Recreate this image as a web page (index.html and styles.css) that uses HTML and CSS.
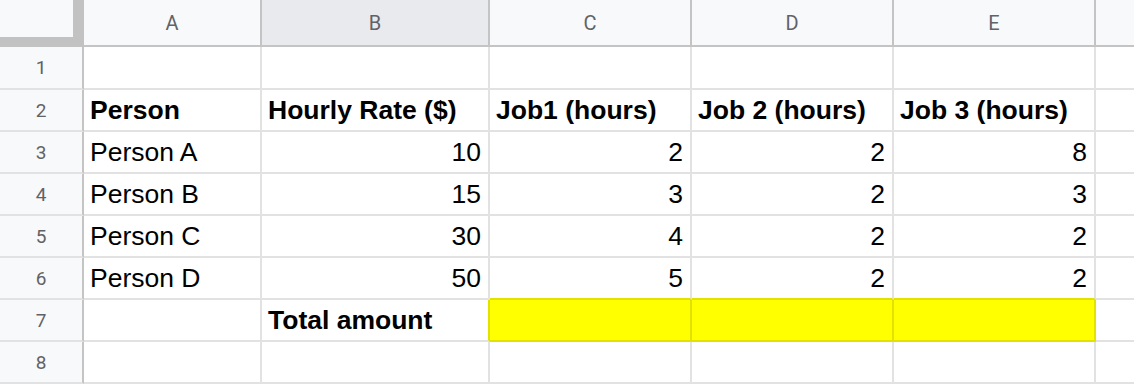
FILE: index.html
```html
<!DOCTYPE html>
<html>
<head>
<meta charset="utf-8">
<link rel="stylesheet" href="styles.css">
</head>
<body>
<div class="sheet">
  <div class="corner"><div class="corner-inner"></div></div>
  <div class="colhead">A</div>
  <div class="colhead hover">B</div>
  <div class="colhead">C</div>
  <div class="colhead">D</div>
  <div class="colhead">E</div>
  <div class="colhead last"></div>

  <div class="rowhead">1</div>
  <div class="cell"></div><div class="cell"></div><div class="cell"></div><div class="cell"></div><div class="cell"></div><div class="cell last"></div>

  <div class="rowhead">2</div>
  <div class="cell bold">Person</div>
  <div class="cell bold">Hourly Rate ($)</div>
  <div class="cell bold">Job1 (hours)</div>
  <div class="cell bold">Job 2 (hours)</div>
  <div class="cell bold">Job 3 (hours)</div>
  <div class="cell last"></div>

  <div class="rowhead">3</div>
  <div class="cell">Person A</div>
  <div class="cell num">10</div>
  <div class="cell num">2</div>
  <div class="cell num">2</div>
  <div class="cell num">8</div>
  <div class="cell last"></div>

  <div class="rowhead">4</div>
  <div class="cell">Person B</div>
  <div class="cell num">15</div>
  <div class="cell num">3</div>
  <div class="cell num">2</div>
  <div class="cell num">3</div>
  <div class="cell last"></div>

  <div class="rowhead">5</div>
  <div class="cell">Person C</div>
  <div class="cell num">30</div>
  <div class="cell num">4</div>
  <div class="cell num">2</div>
  <div class="cell num">2</div>
  <div class="cell last"></div>

  <div class="rowhead">6</div>
  <div class="cell">Person D</div>
  <div class="cell num">50</div>
  <div class="cell num yb">5</div>
  <div class="cell num yb">2</div>
  <div class="cell num yb">2</div>
  <div class="cell last"></div>

  <div class="rowhead">7</div>
  <div class="cell"></div>
  <div class="cell bold yr">Total amount</div>
  <div class="cell yellow"></div>
  <div class="cell yellow"></div>
  <div class="cell yellow"></div>
  <div class="cell last"></div>

  <div class="rowhead">8</div>
  <div class="cell"></div><div class="cell"></div><div class="cell"></div><div class="cell"></div><div class="cell"></div><div class="cell last"></div>
</div>
</body>
</html>
```
FILE: styles.css
```css
html, body {
  margin: 0;
  padding: 0;
  background: #ffffff;
}

.sheet {
  display: grid;
  grid-template-columns: 84px 178px 228px 202px 202px 202px 1fr;
  grid-template-rows: 47px 43px repeat(7, 42px);
  width: 1134px;
  height: 384px;
  overflow: hidden;
  font-family: "Liberation Sans", Arial, sans-serif;
}

.corner {
  background: #c2c2c2;
  box-sizing: border-box;
}

.corner-inner {
  width: 73px;
  height: 37px;
  background: #f8f9fa;
}

.colhead {
  box-sizing: border-box;
  background: #f8f9fa;
  border-right: 2px solid #c4c4c4;
  border-bottom: 2px solid #c4c4c4;
  display: flex;
  align-items: center;
  justify-content: center;
  font-family: Roboto, "Liberation Sans", sans-serif;
  font-size: 20px;
  color: #5f6368;
}

.colhead.hover {
  background: #e8eaed;
}

.colhead.last {
  border-right: none;
}

.rowhead {
  box-sizing: border-box;
  background: #f8f9fa;
  border-right: 2px solid #c4c4c4;
  border-bottom: 2px solid #e2e2e3;
  display: flex;
  align-items: center;
  justify-content: center;
  font-family: Roboto, "Liberation Sans", sans-serif;
  font-size: 19px;
  color: #5f6368;
}

.cell {
  box-sizing: border-box;
  border-right: 2px solid #e2e2e3;
  border-bottom: 2px solid #e2e2e3;
  display: flex;
  align-items: flex-end;
  padding: 0 7px 7px 6px;
  font-size: 26.5px;
  line-height: 1;
  color: #000000;
  white-space: nowrap;
}

.cell.last {
  border-right: none;
}

.bold {
  font-weight: bold;
}

.num {
  justify-content: flex-end;
}

.yellow {
  background: #ffff00;
  border-right-color: #e2e200;
  border-bottom-color: #e2e200;
}

.yb {
  border-bottom-color: #e2e200;
}

.yr {
  border-right-color: #e2e200;
}
```
